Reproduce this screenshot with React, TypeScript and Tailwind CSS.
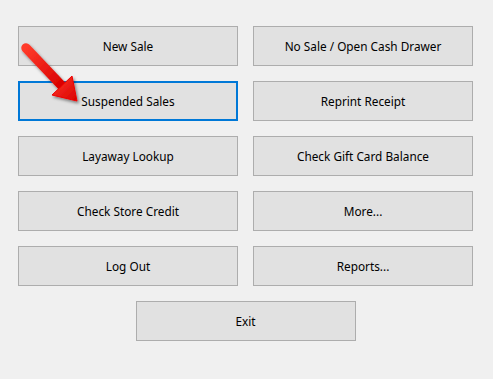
import React from "react";

const buttons = [
  "New Sale",
  "No Sale / Open Cash Drawer",
  "Suspended Sales",
  "Reprint Receipt",
  "Layaway Lookup",
  "Check Gift Card Balance",
  "Check Store Credit",
  "More...",
  "Log Out",
  "Reports...",
];

function Arrow() {
  return (
    <svg
      className="pointer-events-none absolute left-0 top-0"
      width="100"
      height="120"
      viewBox="0 0 100 120"
    >
      <defs>
        <linearGradient id="red" x1="0" y1="0" x2="1" y2="1">
          <stop offset="0" stopColor="#ff3a2a" />
          <stop offset="1" stopColor="#d80000" />
        </linearGradient>
        <filter id="shadow" x="-30%" y="-30%" width="160%" height="160%">
          <feDropShadow dx="1.5" dy="2" stdDeviation="1.6" floodColor="#000" floodOpacity="0.45" />
        </filter>
      </defs>
      <g filter="url(#shadow)">
        <line x1="26" y1="48" x2="62" y2="86" stroke="url(#red)" strokeWidth="9.5" strokeLinecap="round" />
        <polygon points="52,95 72,76 77,101" fill="url(#red)" strokeLinejoin="round" stroke="#e00" strokeWidth="1" />
      </g>
    </svg>
  );
}

export default function App() {
  return (
    <div
      className="relative min-h-screen w-full bg-[#f0f0f0] text-[11.8px] text-black"
      style={{ fontFamily: '"Segoe UI", "Noto Sans", sans-serif' }}
    >
      <div className="grid grid-cols-[220px_220px] gap-[15px] pl-[18px] pt-[26px]">
        {buttons.map((label) => (
          <button
            key={label}
            className={
              label === "Suspended Sales"
                ? "h-10 border-2 border-[#0078d7] bg-[#e1e1e1] pt-[2px]"
                : "h-10 border border-[#adadad] bg-[#e1e1e1] pt-[2px]"
            }
          >
            {label}
          </button>
        ))}
        <button className="col-span-2 h-10 w-[220px] justify-self-center border border-[#adadad] bg-[#e1e1e1] pt-[2px]">
          Exit
        </button>
      </div>
      <Arrow />
    </div>
  );
}
